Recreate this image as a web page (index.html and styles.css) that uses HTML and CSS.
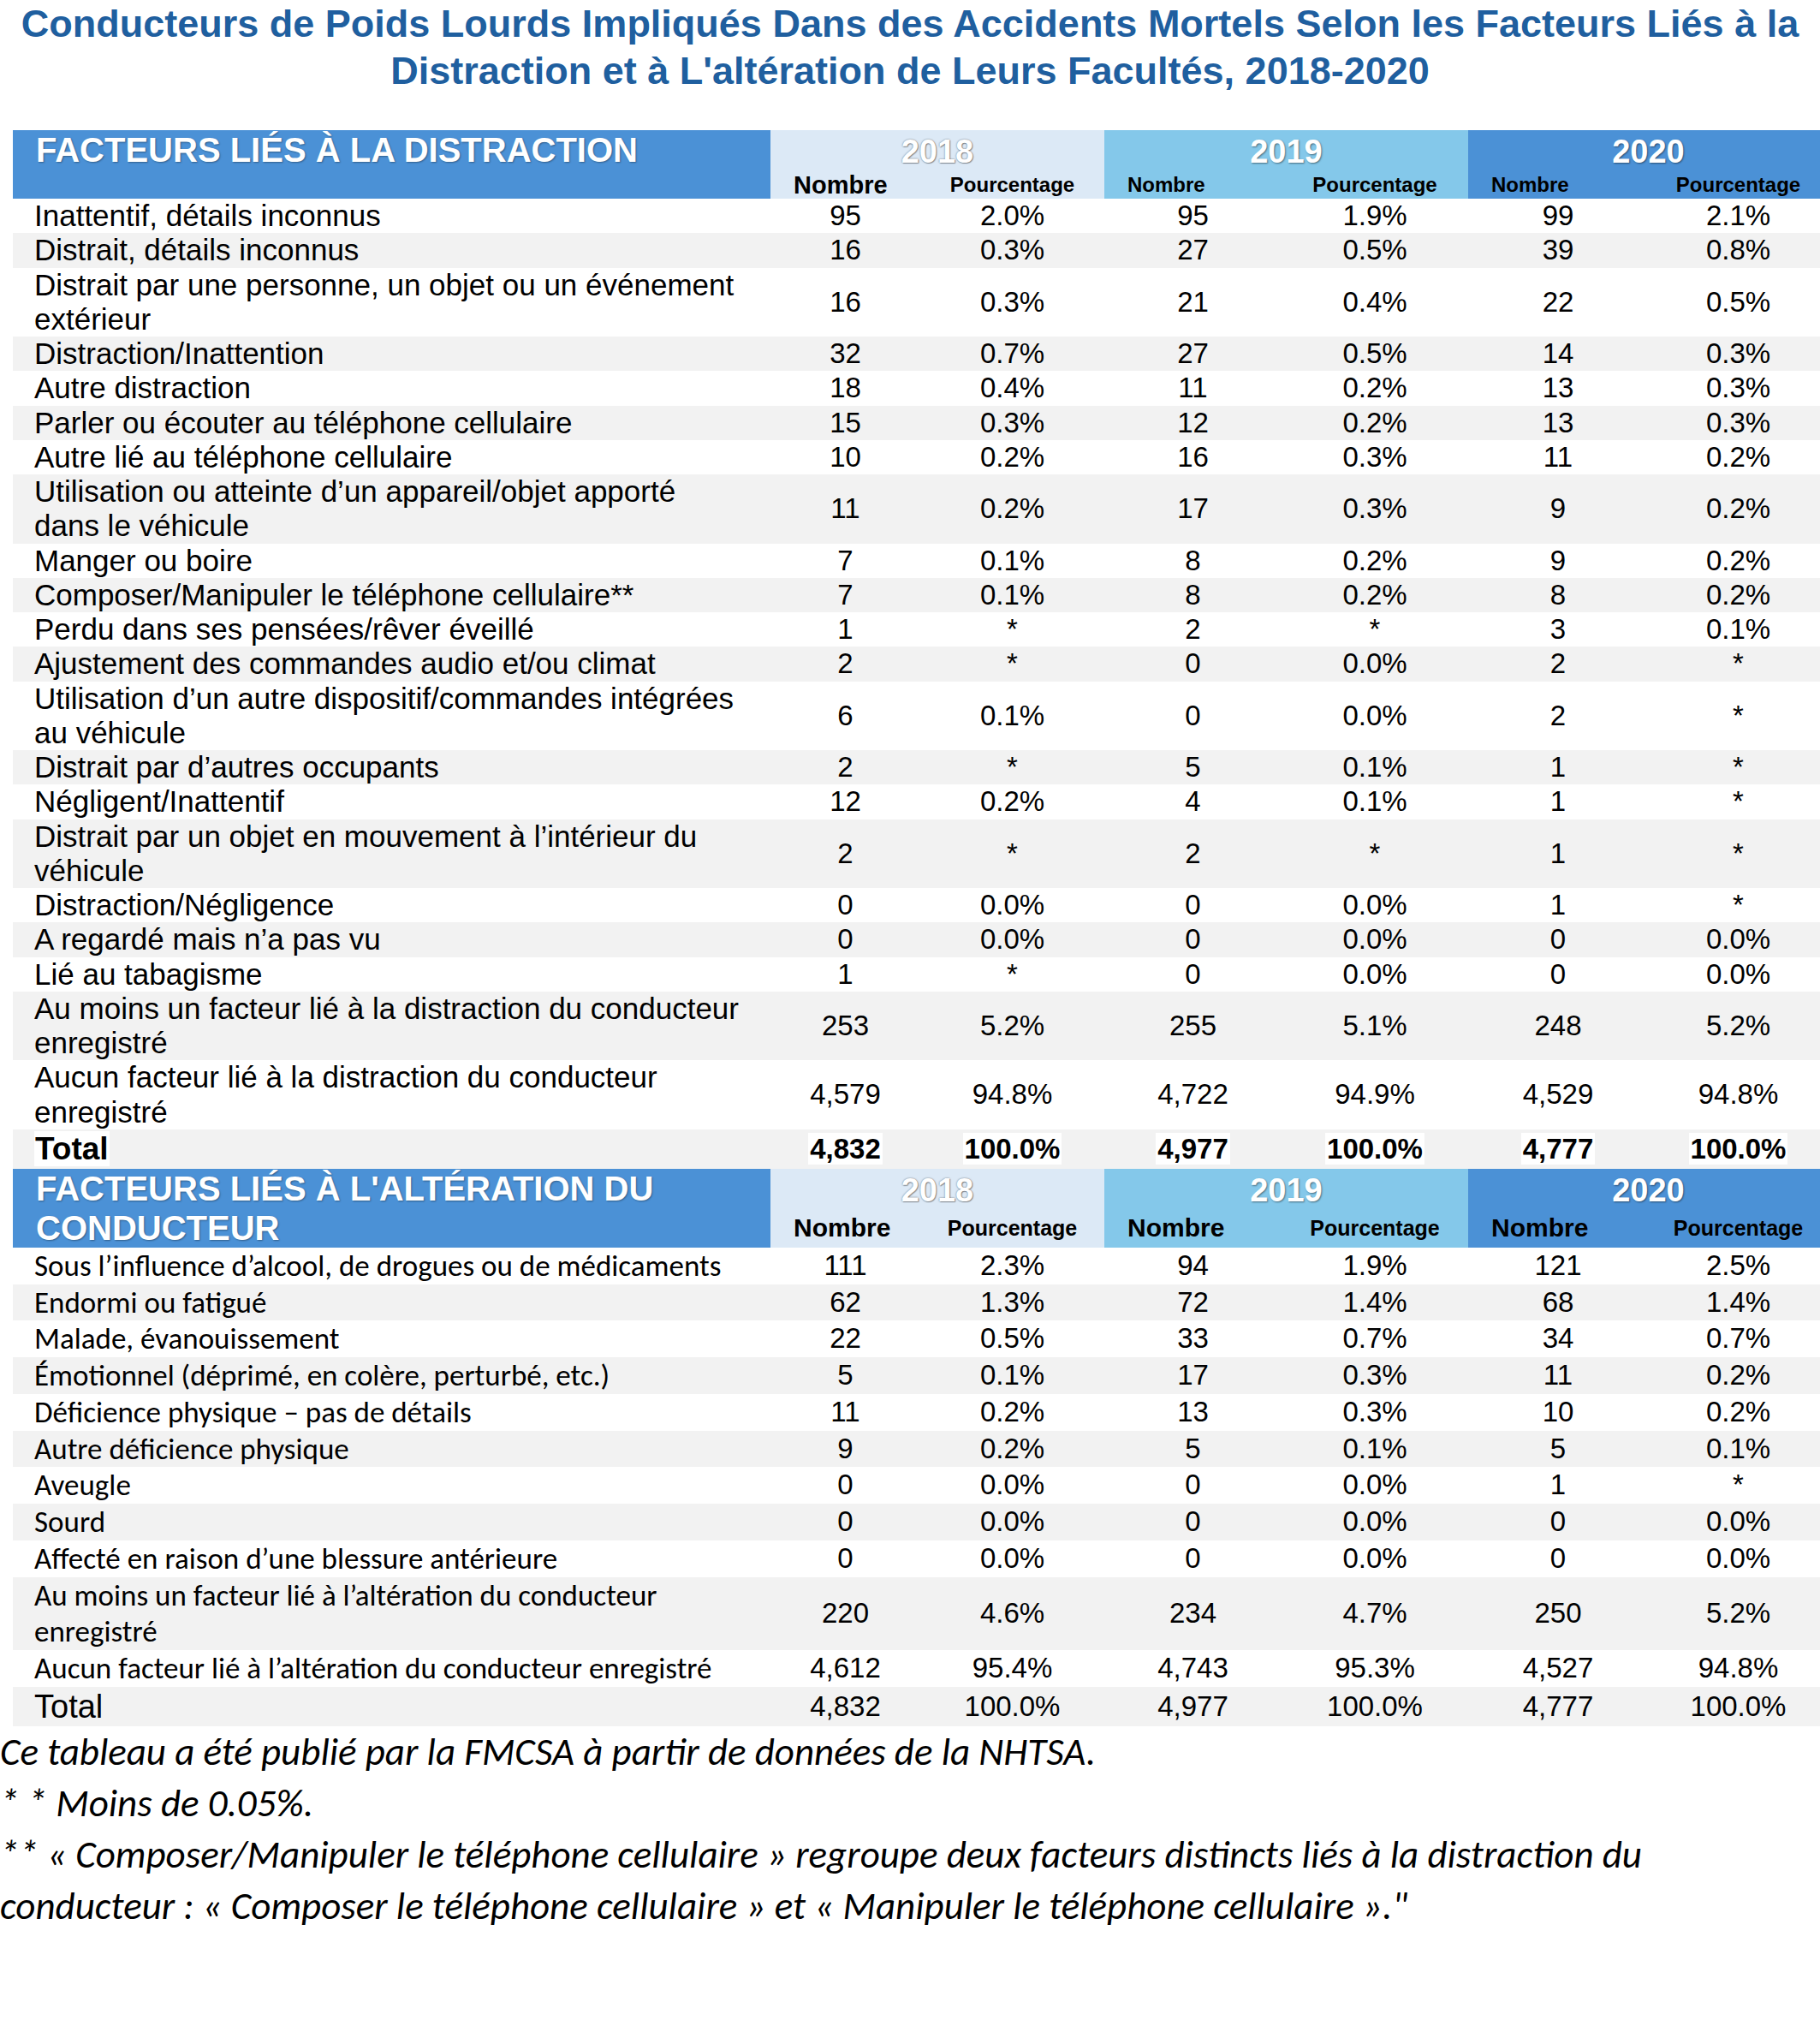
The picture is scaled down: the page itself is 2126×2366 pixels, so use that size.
FILE: index.html
```html
<!DOCTYPE html>
<html lang="fr">
<head>
<meta charset="utf-8">
<title>Conducteurs de Poids Lourds</title>
<link rel="stylesheet" href="styles.css">
</head>
<body>
<h1 class="title">Conducteurs de Poids Lourds Impliqués Dans des Accidents Mortels Selon les Facteurs Liés à la<br>Distraction et à L'altération de Leurs Facultés, 2018-2020</h1>

<div class="table t1">
  <div class="head head1">
    <div class="head-label">FACTEURS LIÉS À LA DISTRACTION</div>
    <div class="grp g18"><div class="year">2018</div><div class="nb big">Nombre</div><div class="pc">Pourcentage</div></div>
    <div class="grp g19"><div class="year">2019</div><div class="nb">Nombre</div><div class="pc">Pourcentage</div></div>
    <div class="grp g20"><div class="year">2020</div><div class="nb">Nombre</div><div class="pc">Pourcentage</div></div>
  </div>
  <div class="body">
    <div class="row"><div class="lab">Inattentif, détails inconnus</div><div class="n">95</div><div class="n">2.0%</div><div class="n">95</div><div class="n">1.9%</div><div class="n">99</div><div class="n">2.1%</div></div>
    <div class="row"><div class="lab">Distrait, détails inconnus</div><div class="n">16</div><div class="n">0.3%</div><div class="n">27</div><div class="n">0.5%</div><div class="n">39</div><div class="n">0.8%</div></div>
    <div class="row"><div class="lab">Distrait par une personne, un objet ou un événement<br>extérieur</div><div class="n">16</div><div class="n">0.3%</div><div class="n">21</div><div class="n">0.4%</div><div class="n">22</div><div class="n">0.5%</div></div>
    <div class="row"><div class="lab">Distraction/Inattention</div><div class="n">32</div><div class="n">0.7%</div><div class="n">27</div><div class="n">0.5%</div><div class="n">14</div><div class="n">0.3%</div></div>
    <div class="row"><div class="lab">Autre distraction</div><div class="n">18</div><div class="n">0.4%</div><div class="n">11</div><div class="n">0.2%</div><div class="n">13</div><div class="n">0.3%</div></div>
    <div class="row"><div class="lab">Parler ou écouter au téléphone cellulaire</div><div class="n">15</div><div class="n">0.3%</div><div class="n">12</div><div class="n">0.2%</div><div class="n">13</div><div class="n">0.3%</div></div>
    <div class="row"><div class="lab">Autre lié au téléphone cellulaire</div><div class="n">10</div><div class="n">0.2%</div><div class="n">16</div><div class="n">0.3%</div><div class="n">11</div><div class="n">0.2%</div></div>
    <div class="row"><div class="lab">Utilisation ou atteinte d’un appareil/objet apporté<br>dans le véhicule</div><div class="n">11</div><div class="n">0.2%</div><div class="n">17</div><div class="n">0.3%</div><div class="n">9</div><div class="n">0.2%</div></div>
    <div class="row"><div class="lab">Manger ou boire</div><div class="n">7</div><div class="n">0.1%</div><div class="n">8</div><div class="n">0.2%</div><div class="n">9</div><div class="n">0.2%</div></div>
    <div class="row"><div class="lab">Composer/Manipuler le téléphone cellulaire**</div><div class="n">7</div><div class="n">0.1%</div><div class="n">8</div><div class="n">0.2%</div><div class="n">8</div><div class="n">0.2%</div></div>
    <div class="row"><div class="lab">Perdu dans ses pensées/rêver éveillé</div><div class="n">1</div><div class="n">*</div><div class="n">2</div><div class="n">*</div><div class="n">3</div><div class="n">0.1%</div></div>
    <div class="row"><div class="lab">Ajustement des commandes audio et/ou climat</div><div class="n">2</div><div class="n">*</div><div class="n">0</div><div class="n">0.0%</div><div class="n">2</div><div class="n">*</div></div>
    <div class="row"><div class="lab">Utilisation d’un autre dispositif/commandes intégrées<br>au véhicule</div><div class="n">6</div><div class="n">0.1%</div><div class="n">0</div><div class="n">0.0%</div><div class="n">2</div><div class="n">*</div></div>
    <div class="row"><div class="lab">Distrait par d’autres occupants</div><div class="n">2</div><div class="n">*</div><div class="n">5</div><div class="n">0.1%</div><div class="n">1</div><div class="n">*</div></div>
    <div class="row"><div class="lab">Négligent/Inattentif</div><div class="n">12</div><div class="n">0.2%</div><div class="n">4</div><div class="n">0.1%</div><div class="n">1</div><div class="n">*</div></div>
    <div class="row"><div class="lab">Distrait par un objet en mouvement à l’intérieur du<br>véhicule</div><div class="n">2</div><div class="n">*</div><div class="n">2</div><div class="n">*</div><div class="n">1</div><div class="n">*</div></div>
    <div class="row"><div class="lab">Distraction/Négligence</div><div class="n">0</div><div class="n">0.0%</div><div class="n">0</div><div class="n">0.0%</div><div class="n">1</div><div class="n">*</div></div>
    <div class="row"><div class="lab">A regardé mais n’a pas vu</div><div class="n">0</div><div class="n">0.0%</div><div class="n">0</div><div class="n">0.0%</div><div class="n">0</div><div class="n">0.0%</div></div>
    <div class="row"><div class="lab">Lié au tabagisme</div><div class="n">1</div><div class="n">*</div><div class="n">0</div><div class="n">0.0%</div><div class="n">0</div><div class="n">0.0%</div></div>
    <div class="row"><div class="lab">Au moins un facteur lié à la distraction du conducteur<br>enregistré</div><div class="n">253</div><div class="n">5.2%</div><div class="n">255</div><div class="n">5.1%</div><div class="n">248</div><div class="n">5.2%</div></div>
    <div class="row"><div class="lab">Aucun facteur lié à la distraction du conducteur<br>enregistré</div><div class="n">4,579</div><div class="n">94.8%</div><div class="n">4,722</div><div class="n">94.9%</div><div class="n">4,529</div><div class="n">94.8%</div></div>
    <div class="row total"><div class="lab"><span class="hl">Total</span></div><div class="n"><span class="hl">4,832</span></div><div class="n"><span class="hl">100.0%</span></div><div class="n"><span class="hl">4,977</span></div><div class="n"><span class="hl">100.0%</span></div><div class="n"><span class="hl">4,777</span></div><div class="n"><span class="hl">100.0%</span></div></div>
  </div>
</div>

<div class="table t2">
  <div class="head head2">
    <div class="head-label">FACTEURS LIÉS À L'ALTÉRATION DU<br>CONDUCTEUR</div>
    <div class="grp g18"><div class="year">2018</div><div class="nb big">Nombre</div><div class="pc">Pourcentage</div></div>
    <div class="grp g19"><div class="year">2019</div><div class="nb big">Nombre</div><div class="pc">Pourcentage</div></div>
    <div class="grp g20"><div class="year">2020</div><div class="nb big">Nombre</div><div class="pc">Pourcentage</div></div>
  </div>
  <div class="body">
    <div class="row"><div class="lab">Sous l’influence d’alcool, de drogues ou de médicaments</div><div class="n">111</div><div class="n">2.3%</div><div class="n">94</div><div class="n">1.9%</div><div class="n">121</div><div class="n">2.5%</div></div>
    <div class="row"><div class="lab">Endormi ou fatigué</div><div class="n">62</div><div class="n">1.3%</div><div class="n">72</div><div class="n">1.4%</div><div class="n">68</div><div class="n">1.4%</div></div>
    <div class="row"><div class="lab">Malade, évanouissement</div><div class="n">22</div><div class="n">0.5%</div><div class="n">33</div><div class="n">0.7%</div><div class="n">34</div><div class="n">0.7%</div></div>
    <div class="row"><div class="lab">Émotionnel (déprimé, en colère, perturbé, etc.)</div><div class="n">5</div><div class="n">0.1%</div><div class="n">17</div><div class="n">0.3%</div><div class="n">11</div><div class="n">0.2%</div></div>
    <div class="row"><div class="lab">Déficience physique – pas de détails</div><div class="n">11</div><div class="n">0.2%</div><div class="n">13</div><div class="n">0.3%</div><div class="n">10</div><div class="n">0.2%</div></div>
    <div class="row"><div class="lab">Autre déficience physique</div><div class="n">9</div><div class="n">0.2%</div><div class="n">5</div><div class="n">0.1%</div><div class="n">5</div><div class="n">0.1%</div></div>
    <div class="row"><div class="lab">Aveugle</div><div class="n">0</div><div class="n">0.0%</div><div class="n">0</div><div class="n">0.0%</div><div class="n">1</div><div class="n">*</div></div>
    <div class="row"><div class="lab">Sourd</div><div class="n">0</div><div class="n">0.0%</div><div class="n">0</div><div class="n">0.0%</div><div class="n">0</div><div class="n">0.0%</div></div>
    <div class="row"><div class="lab">Affecté en raison d’une blessure antérieure</div><div class="n">0</div><div class="n">0.0%</div><div class="n">0</div><div class="n">0.0%</div><div class="n">0</div><div class="n">0.0%</div></div>
    <div class="row"><div class="lab">Au moins un facteur lié à l’altération du conducteur<br>enregistré</div><div class="n">220</div><div class="n">4.6%</div><div class="n">234</div><div class="n">4.7%</div><div class="n">250</div><div class="n">5.2%</div></div>
    <div class="row"><div class="lab">Aucun facteur lié à l’altération du conducteur enregistré</div><div class="n">4,612</div><div class="n">95.4%</div><div class="n">4,743</div><div class="n">95.3%</div><div class="n">4,527</div><div class="n">94.8%</div></div>
    <div class="row total"><div class="lab">Total</div><div class="n">4,832</div><div class="n">100.0%</div><div class="n">4,977</div><div class="n">100.0%</div><div class="n">4,777</div><div class="n">100.0%</div></div>
  </div>
</div>

<div class="notes">
  <p>Ce tableau a été publié par la FMCSA à partir de données de la NHTSA.</p>
  <p>* * Moins de 0.05%.</p>
  <p>** « Composer/Manipuler le téléphone cellulaire » regroupe deux facteurs distincts liés à la distraction du<br>conducteur : « Composer le téléphone cellulaire » et « Manipuler le téléphone cellulaire »."</p>
</div>
</body>
</html>
```

FILE: styles.css
```css
html, body {
  margin: 0;
  padding: 0;
  background: #ffffff;
  overflow: hidden;
}

body {
  font-family: "Liberation Sans", Arial, sans-serif;
  color: #000;
}

.title {
  margin: 0;
  text-align: center;
  color: #1f5f9f;
  font-family: "Liberation Sans", Arial, sans-serif;
  font-weight: bold;
  font-size: 45px;
  line-height: 55px;
}

.table {
  margin-left: 15px;
  width: 2121px;
}

.t1 {
  margin-top: 42px;
}

/* header */
.head {
  display: grid;
  grid-template-columns: 885px 390px 425px 421px;
}

.head1 { height: 80px; }
.head2 { height: 92px; }

.head-label {
  background: #4b91d6;
  color: #fff;
  font-weight: bold;
  font-size: 40px;
  line-height: 46px;
  padding-left: 27px;
  text-shadow: 1px 1px 2px rgba(0, 0, 0, 0.35);
}

.grp {
  display: grid;
  grid-template-rows: 48px 1fr;
}

.g18 { grid-template-columns: 175px 215px; background: #dce9f6; }
.g19 { grid-template-columns: 207px 218px; background: #84c8ea; }
.g20 { grid-template-columns: 210px 211px; background: #4b91d6; }

.year {
  grid-column: 1 / -1;
  text-align: center;
  color: #fff;
  font-weight: bold;
  font-size: 38px;
  line-height: 46px;
  padding-top: 2px;
  text-shadow: 1px 1px 2px rgba(0, 0, 0, 0.45);
}

.g18 .year {
  text-shadow: 0 0 2px rgba(0, 0, 0, 0.55), 1px 1px 1px rgba(0, 0, 0, 0.3);
}

.nb, .pc {
  align-self: end;
  font-weight: bold;
  font-size: 24px;
  line-height: 32px;
}

.nb {
  padding-left: 27px;
}

.nb.big {
  font-size: 29px;
}

.pc {
  text-align: center;
}

.head2 .nb, .head2 .pc {
  padding-bottom: 7px;
}

.head2 .nb.big { font-size: 30px; }
.head2 .pc { font-size: 25px; }

/* body rows */
.row {
  display: grid;
  grid-template-columns: 885px 175px 215px 207px 218px 210px 211px;
  align-items: center;
}

.body .row:nth-child(even) {
  background: #f2f2f2;
}

.lab {
  padding-left: 25px;
}

.n {
  text-align: center;
  font-size: 33px;
}

.t1 .row {
  line-height: 40.25px;
}

.t1 .lab {
  font-size: 35px;
}

.t2 .row {
  line-height: 42.75px;
}

.t2 .lab {
  font-family: Carlito, Lato, "Liberation Sans", sans-serif;
  font-size: 35px;
}

.t1 .total {
  line-height: 46px;
}

.t1 .total .lab {
  font-size: 37px;
  font-weight: bold;
}

.t1 .total .n {
  font-weight: bold;
}

.hl {
  background: #ffffff;
  padding: 0 2px;
}

.t1 .total .lab .hl {
  padding: 0 1px;
}

.t2 .total {
  line-height: 46px;
}

.t2 .total .lab {
  font-family: "Liberation Sans", Arial, sans-serif;
  font-size: 38px;
}

/* notes */
.notes {
  font-family: Carlito, Lato, "Liberation Sans", sans-serif;
  font-style: italic;
  font-size: 45px;
  line-height: 60px;
}

.notes p {
  margin: 0;
}
```
